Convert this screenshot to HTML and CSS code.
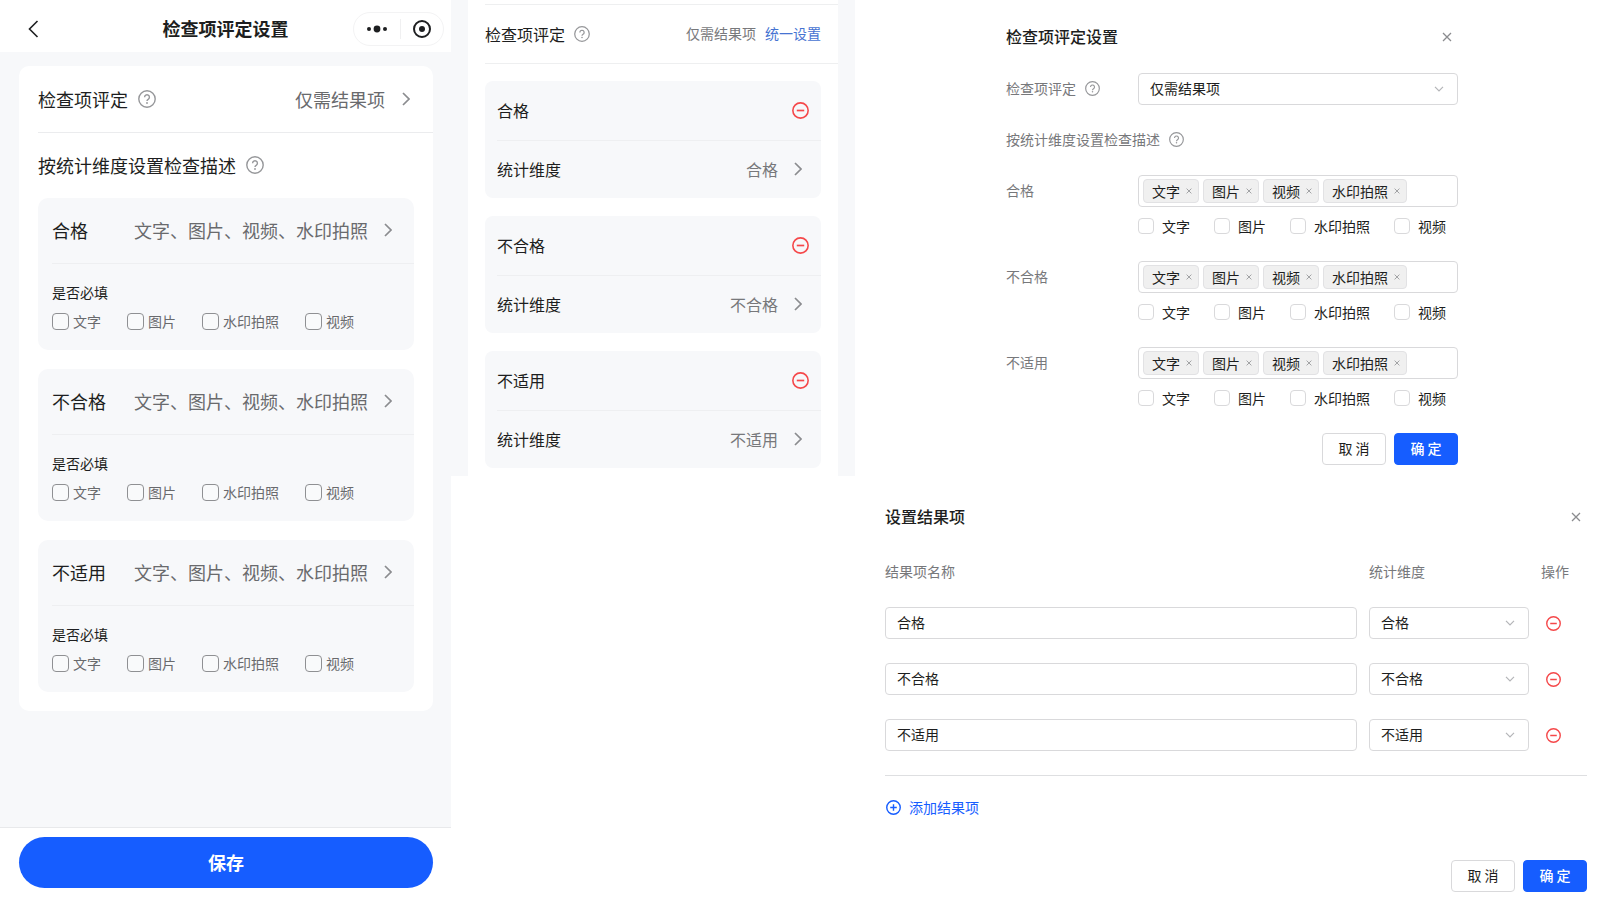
FILE: index.html
```html
<!DOCTYPE html>
<html lang="zh-CN">
<head>
<meta charset="utf-8">
<meta name="viewport" content="width=device-width, initial-scale=1">
<title>检查项评定设置</title>
<link rel="stylesheet" href="styles.css">
</head>
<body>
<svg class="sprite" aria-hidden="true">
  <symbol id="help" viewBox="0 0 18 18"><circle cx="9" cy="9" r="8.2" fill="none" stroke="currentColor" stroke-width="1.4"/><path d="M6.6 7.2a2.4 2.4 0 1 1 3.6 2.1C9.4 9.8 9 10.2 9 11.1" fill="none" stroke="currentColor" stroke-width="1.4"/><circle cx="9" cy="13" r=".9" fill="currentColor"/></symbol>
  <symbol id="next" viewBox="0 0 8 14"><path d="M1 1l6 6-6 6" fill="none" stroke="currentColor" stroke-width="1.7"/></symbol>
  <symbol id="down" viewBox="0 0 10 6"><path d="M1 .8l4 4 4-4" fill="none" stroke="currentColor" stroke-width="1.2"/></symbol>
  <symbol id="close" viewBox="0 0 10 10"><path d="M1 1l8 8M9 1l-8 8" fill="none" stroke="currentColor" stroke-width="1.3"/></symbol>
  <symbol id="minus" viewBox="0 0 16 16"><circle cx="8" cy="8" r="7.2" fill="none" stroke="currentColor" stroke-width="1.5"/><path d="M4.5 8h7" stroke="currentColor" stroke-width="1.6"/></symbol>
  <symbol id="plus" viewBox="0 0 16 16"><circle cx="8" cy="8" r="7.2" fill="none" stroke="currentColor" stroke-width="1.5"/><path d="M4.5 8h7M8 4.5v7" stroke="currentColor" stroke-width="1.5"/></symbol>
</svg>
<div class="board">
  <section class="phone">
    <header class="nav">
      <button class="nav-back" type="button" aria-label="返回"><svg width="11" height="18" viewBox="0 0 11 18"><path d="M9.5 1L1.5 9l8 8" fill="none" stroke="currentColor" stroke-width="1.6"/></svg></button>
      <h1 class="nav-title">检查项评定设置</h1>
      <div class="capsule">
        <button type="button" aria-label="更多"><svg width="20" height="8" viewBox="0 0 20 8"><circle cx="2" cy="4" r="2"/><circle cx="10" cy="4" r="3.4"/><circle cx="18" cy="4" r="2"/></svg></button>
        <button type="button" aria-label="关闭"><svg width="20" height="20" viewBox="0 0 20 20"><circle cx="10" cy="10" r="8" fill="none" stroke="currentColor" stroke-width="2"/><circle cx="10" cy="10" r="3"/></svg></button>
      </div>
    </header>
    <main class="phone-main">
      <div class="panel">
        <div class="panel-row">
          <span class="with-help">检查项评定<svg class="help-lg"><use href="#help"/></svg></span>
          <button class="pick" type="button">仅需结果项<svg class="next"><use href="#next"/></svg></button>
        </div>
        <h2 class="panel-title with-help">按统计维度设置检查描述<svg class="help-lg"><use href="#help"/></svg></h2>
        <div class="cards">
          <section class="card">
            <div class="card-head"><h3>合格</h3><button class="pick" type="button">文字、图片、视频、水印拍照<svg class="next"><use href="#next"/></svg></button></div>
            <fieldset class="required"><legend>是否必填</legend><div class="checks">
              <label><input type="checkbox">文字</label><label><input type="checkbox">图片</label><label><input type="checkbox">水印拍照</label><label><input type="checkbox">视频</label>
            </div></fieldset>
          </section>
          <section class="card">
            <div class="card-head"><h3>不合格</h3><button class="pick" type="button">文字、图片、视频、水印拍照<svg class="next"><use href="#next"/></svg></button></div>
            <fieldset class="required"><legend>是否必填</legend><div class="checks">
              <label><input type="checkbox">文字</label><label><input type="checkbox">图片</label><label><input type="checkbox">水印拍照</label><label><input type="checkbox">视频</label>
            </div></fieldset>
          </section>
          <section class="card">
            <div class="card-head"><h3>不适用</h3><button class="pick" type="button">文字、图片、视频、水印拍照<svg class="next"><use href="#next"/></svg></button></div>
            <fieldset class="required"><legend>是否必填</legend><div class="checks">
              <label><input type="checkbox">文字</label><label><input type="checkbox">图片</label><label><input type="checkbox">水印拍照</label><label><input type="checkbox">视频</label>
            </div></fieldset>
          </section>
        </div>
      </div>
    </main>
    <footer class="phone-foot"><button class="save" type="button">保存</button></footer>
  </section>

  <section class="results">
    <div class="results-sheet">
      <div class="results-head">
        <span class="with-help">检查项评定<svg class="help-md"><use href="#help"/></svg></span>
        <span class="results-mode">仅需结果项<a href="#unified">统一设置</a></span>
      </div>
      <div class="results-list">
        <section class="result">
          <div class="result-name"><h3>合格</h3><button class="remove" type="button" aria-label="删除合格"><svg><use href="#minus"/></svg></button></div>
          <div class="result-dim"><span>统计维度</span><button class="pick" type="button">合格<svg class="next"><use href="#next"/></svg></button></div>
        </section>
        <section class="result">
          <div class="result-name"><h3>不合格</h3><button class="remove" type="button" aria-label="删除不合格"><svg><use href="#minus"/></svg></button></div>
          <div class="result-dim"><span>统计维度</span><button class="pick" type="button">不合格<svg class="next"><use href="#next"/></svg></button></div>
        </section>
        <section class="result">
          <div class="result-name"><h3>不适用</h3><button class="remove" type="button" aria-label="删除不适用"><svg><use href="#minus"/></svg></button></div>
          <div class="result-dim"><span>统计维度</span><button class="pick" type="button">不适用<svg class="next"><use href="#next"/></svg></button></div>
        </section>
      </div>
    </div>
  </section>

  <section class="dialog dialog-rating">
    <header class="dialog-head"><h2>检查项评定设置</h2><button class="close" type="button" aria-label="关闭"><svg><use href="#close"/></svg></button></header>
    <form class="rating-form">
      <div class="field">
        <label class="field-label with-help" for="rating">检查项评定<svg class="help-sm"><use href="#help"/></svg></label>
        <div class="select"><select id="rating"><option>仅需结果项</option></select><svg class="down"><use href="#down"/></svg></div>
      </div>
      <p class="form-note with-help">按统计维度设置检查描述<svg class="help-sm"><use href="#help"/></svg></p>
      <div class="field">
        <span class="field-label">合格</span>
        <div class="field-body">
          <div class="tags"><span class="tag">文字<button type="button" aria-label="移除文字"><svg><use href="#close"/></svg></button></span><span class="tag">图片<button type="button" aria-label="移除图片"><svg><use href="#close"/></svg></button></span><span class="tag">视频<button type="button" aria-label="移除视频"><svg><use href="#close"/></svg></button></span><span class="tag">水印拍照<button type="button" aria-label="移除水印拍照"><svg><use href="#close"/></svg></button></span></div>
          <div class="form-checks"><label><input type="checkbox">文字</label><label><input type="checkbox">图片</label><label><input type="checkbox">水印拍照</label><label><input type="checkbox">视频</label></div>
        </div>
      </div>
      <div class="field">
        <span class="field-label">不合格</span>
        <div class="field-body">
          <div class="tags"><span class="tag">文字<button type="button" aria-label="移除文字"><svg><use href="#close"/></svg></button></span><span class="tag">图片<button type="button" aria-label="移除图片"><svg><use href="#close"/></svg></button></span><span class="tag">视频<button type="button" aria-label="移除视频"><svg><use href="#close"/></svg></button></span><span class="tag">水印拍照<button type="button" aria-label="移除水印拍照"><svg><use href="#close"/></svg></button></span></div>
          <div class="form-checks"><label><input type="checkbox">文字</label><label><input type="checkbox">图片</label><label><input type="checkbox">水印拍照</label><label><input type="checkbox">视频</label></div>
        </div>
      </div>
      <div class="field">
        <span class="field-label">不适用</span>
        <div class="field-body">
          <div class="tags"><span class="tag">文字<button type="button" aria-label="移除文字"><svg><use href="#close"/></svg></button></span><span class="tag">图片<button type="button" aria-label="移除图片"><svg><use href="#close"/></svg></button></span><span class="tag">视频<button type="button" aria-label="移除视频"><svg><use href="#close"/></svg></button></span><span class="tag">水印拍照<button type="button" aria-label="移除水印拍照"><svg><use href="#close"/></svg></button></span></div>
          <div class="form-checks"><label><input type="checkbox">文字</label><label><input type="checkbox">图片</label><label><input type="checkbox">水印拍照</label><label><input type="checkbox">视频</label></div>
        </div>
      </div>
      <div class="actions"><button class="btn" type="button">取 消</button><button class="btn btn-primary" type="button">确 定</button></div>
    </form>
  </section>

  <section class="dialog dialog-results">
    <header class="dialog-head"><h2>设置结果项</h2><button class="close" type="button" aria-label="关闭"><svg><use href="#close"/></svg></button></header>
    <table class="items">
      <thead><tr><th scope="col">结果项名称</th><th scope="col" class="col-dim">统计维度</th><th scope="col" class="col-act">操作</th></tr></thead>
      <tbody>
        <tr>
          <td><input class="text" type="text" value="合格" aria-label="结果项名称"></td>
          <td><div class="select"><select aria-label="统计维度"><option>合格</option></select><svg class="down"><use href="#down"/></svg></div></td>
          <td class="act"><button class="remove" type="button" aria-label="删除合格"><svg><use href="#minus"/></svg></button></td>
        </tr>
        <tr>
          <td><input class="text" type="text" value="不合格" aria-label="结果项名称"></td>
          <td><div class="select"><select aria-label="统计维度"><option>不合格</option></select><svg class="down"><use href="#down"/></svg></div></td>
          <td class="act"><button class="remove" type="button" aria-label="删除不合格"><svg><use href="#minus"/></svg></button></td>
        </tr>
        <tr>
          <td><input class="text" type="text" value="不适用" aria-label="结果项名称"></td>
          <td><div class="select"><select aria-label="统计维度"><option>不适用</option></select><svg class="down"><use href="#down"/></svg></div></td>
          <td class="act"><button class="remove" type="button" aria-label="删除不适用"><svg><use href="#minus"/></svg></button></td>
        </tr>
      </tbody>
    </table>
    <div class="add-row"><button class="add" type="button"><svg><use href="#plus"/></svg>添加结果项</button></div>
    <div class="actions"><button class="btn" type="button">取 消</button><button class="btn btn-primary" type="button">确 定</button></div>
  </section>
</div>
</body>
</html>
```

FILE: styles.css
```css
*, *::before, *::after { box-sizing: border-box; }

body {
  margin: 0;
  background: #fff;
  color: #1d1e20;
  font: 14px/22px "Noto Sans CJK SC", sans-serif;
}

h1, h2, h3, p { margin: 0; font-weight: 400; font-size: inherit; line-height: inherit; }
button, input, select { font: inherit; color: inherit; }
button { padding: 0; border: 0; background: none; cursor: pointer; }
svg { display: block; flex: none; }

.sprite { display: none; }

.board {
  display: grid;
  grid-template-columns: 451fr 404fr 745fr;
  grid-template-rows: auto 1fr;
  min-height: 100vh;
}

.with-help { display: flex; align-items: center; }
.with-help svg { color: #96979a; }
.help-lg { width: 18px; height: 18px; margin-left: 10px; }
.help-md { width: 16px; height: 16px; margin-left: 9px; }
.help-sm { width: 15px; height: 15px; margin-left: 9px; }

.pick { display: flex; align-items: center; gap: 17px; color: #696a6d; white-space: nowrap; }
.next { width: 8px; height: 14px; color: #8b8c8f; }

.remove { display: block; color: #f5484a; }
.remove svg { width: 17px; height: 17px; }

/* Mobile settings page */
.phone {
  grid-row: 1 / 3;
  display: flex;
  flex-direction: column;
  background: #f7f8fa;
  font-size: 18px;
  line-height: 26px;
}
.nav {
  display: grid;
  grid-template-columns: 1fr auto 1fr;
  align-items: center;
  padding: 12px 7px 6px 28px;
  background: #fff;
}
.nav-back { justify-self: start; margin-right: 21px; }
.nav-title { margin-right: 21px; padding-bottom: 2px; font-weight: 700; }
.capsule {
  justify-self: end;
  display: grid;
  grid-template-columns: 46px 43px;
  align-items: center;
  height: 34px;
  border: 1px solid #f3f3f4;
  border-radius: 17px;
}
.capsule button { display: flex; justify-content: center; align-items: center; height: 20px; }
.capsule button + button { border-left: 1px solid #f0f0f1; }
.capsule svg { fill: currentColor; }

.phone-main { flex: 1; padding: 14px 18px 19px 19px; }
.panel { padding: 0 0 19px 19px; border-radius: 10px; background: #fff; }
.panel-row {
  display: flex;
  justify-content: space-between;
  align-items: center;
  height: 67px;
  padding-right: 23px;
  border-bottom: 1px solid #ebecee;
}
.panel-title { height: 65px; padding-bottom: 1px; }
.cards { display: grid; gap: 19px; margin-right: 19px; }
.card { padding-left: 14px; border-radius: 10px; background: #f7f8fa; }
.card-head {
  display: grid;
  grid-template-columns: 82px 1fr;
  align-items: center;
  height: 66px;
  padding: 0 22px 2px 0;
  border-bottom: 1px solid #eeeff1;
}
.card-head .pick { justify-content: space-between; gap: 16px; }
.required { margin: 0; padding: 17px 0 18px; border: 0; font-size: 14px; line-height: 22px; }
.required legend { float: left; width: 100%; padding: 0; margin-bottom: 7px; }
.checks { clear: both; display: flex; gap: 26px; color: #696a6d; }
.checks label { display: flex; align-items: center; gap: 4px; }
input[type="checkbox"] { appearance: none; margin: 0; flex: none; background: #fff; }
.checks input[type="checkbox"] {
  width: 17px;
  height: 17px;
  border: 1px solid #8f9093;
  border-radius: 4px;
  background: #f9fafb;
}
.phone-foot { padding: 9px 18px 12px 19px; border-top: 1px solid #e8e9eb; background: #fff; }
.save {
  display: block;
  width: 100%;
  height: 51px;
  padding-bottom: 2px;
  border-radius: 26px;
  background: #165dff;
  color: #fff;
  font-weight: 700;
}

/* Mobile result list */
.results { padding: 0 17px; background: #f7f8fa; font-size: 16px; line-height: 24px; }
.results-sheet { padding: 4px 0 8px 17px; background: #fff; }
.results-head {
  display: flex;
  justify-content: space-between;
  align-items: center;
  height: 60px;
  padding-right: 17px;
  border-top: 1px solid #eeeff0;
  border-bottom: 1px solid #eeeff0;
}
.results-mode { display: flex; gap: 9px; padding-bottom: 2px; font-size: 14px; color: #77787b; }
.results-mode a { color: #4673d2; text-decoration: none; }
.results-list { display: grid; gap: 18px; padding: 17px 17px 0 0; }
.result { padding-left: 12px; border-radius: 8px; background: #f7f8fa; }
.result-name, .result-dim { display: flex; justify-content: space-between; align-items: center; padding-bottom: 1px; }
.result-name { height: 60px; padding-right: 12px; border-bottom: 1px solid #eeeff1; }
.result-dim { height: 57px; padding-right: 19px; }
.result-dim .pick { gap: 16px; color: #77787b; }

/* Desktop dialogs */
.dialog-head { display: flex; justify-content: space-between; align-items: center; }
.dialog-head h2 { padding-bottom: 2px; font-size: 16px; line-height: 22px; font-weight: 500; }
.close { padding: 7px 6px; color: #8b8c8f; }
.close svg { width: 10px; height: 10px; }

.select { display: grid; align-items: center; }
.select select, .select .down { grid-area: 1 / 1; }
.select .down { justify-self: end; width: 10px; height: 6px; margin-right: 14px; color: #b4b5b8; pointer-events: none; }
.select select, .text {
  appearance: none;
  display: block;
  width: 100%;
  height: 32px;
  padding: 0 11px 2px;
  border: 1px solid #d9d9db;
  border-radius: 4px;
  background: #fff;
}

.actions { display: flex; justify-content: flex-end; gap: 8px; }
.btn { width: 64px; height: 32px; padding-bottom: 2px; border: 1px solid #d9d9db; border-radius: 4px; background: #fff; }
.btn-primary { border-color: #165dff; background: #165dff; color: #fff; font-weight: 500; }

.dialog-rating { padding: 25px 142px 11px 151px; }
.dialog-rating .dialog-head { margin-bottom: 24px; }
.field { display: grid; grid-template-columns: 132px 1fr; align-items: start; margin-bottom: 24px; }
.field-label { height: 32px; padding-bottom: 2px; line-height: 30px; color: #77787b; }
.form-note { height: 22px; padding-bottom: 2px; margin-bottom: 24px; color: #77787b; }
.tags { display: flex; gap: 4px; height: 32px; padding: 3px 4px; border: 1px solid #d9d9db; border-radius: 4px; }
.tag {
  display: flex;
  align-items: center;
  gap: 6px;
  height: 24px;
  padding: 0 6px 0 8px;
  border: 1px solid #e2e2e4;
  border-radius: 4px;
  background: #f0f0f0;
  line-height: 20px;
}
.tag svg { width: 6px; height: 6px; color: #8b8c8f; }
.form-checks { display: flex; gap: 24px; padding-top: 8px; }
.form-checks label { display: flex; align-items: center; gap: 8px; }
.form-checks input { width: 16px; height: 16px; border: 1px solid #d9d9db; border-radius: 4px; }

.dialog-results { grid-column: 2 / 4; padding: 29px 13px 8px 434px; }
.dialog-results { display: flex; flex-direction: column; }
.items { width: 100%; margin-top: 18px; border-collapse: collapse; table-layout: fixed; }
.items th { height: 48px; padding: 0; color: #77787b; font-weight: 400; text-align: left; }
.items td { height: 56px; padding: 0 12px 0 0; }
.items .col-dim { width: 172px; }
.items .col-act { width: 46px; }
.items .act { padding: 0 0 0 5px; }
.items .remove svg { width: 15px; height: 15px; }
.add-row { padding-top: 20px; border-top: 1px solid #dedfe1; margin-top: 12px; }
.add { display: flex; align-items: center; gap: 8px; padding-left: 1px; color: #165dff; }
.add svg { width: 15px; height: 15px; }
.dialog-results .actions { margin-top: auto; }
```
